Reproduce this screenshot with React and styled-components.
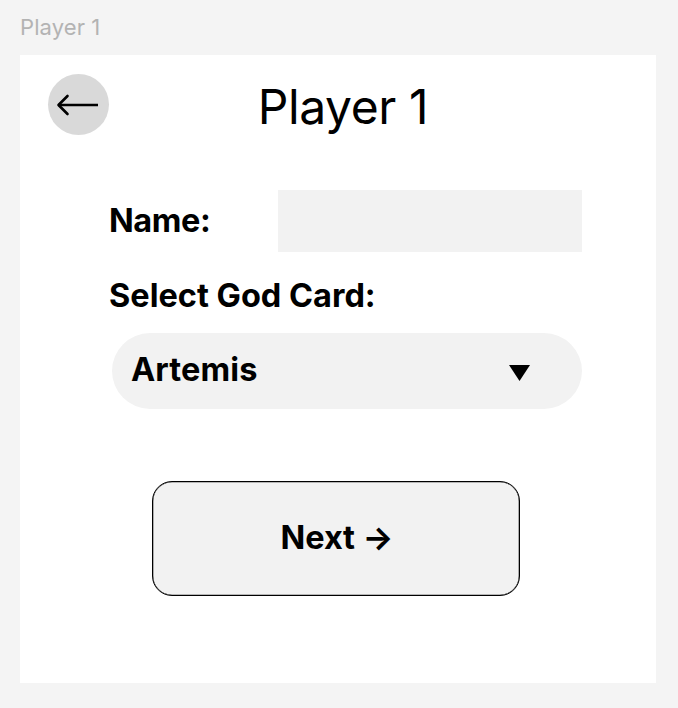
import React from 'react';
import styled, { createGlobalStyle } from 'styled-components';

const GlobalStyle = createGlobalStyle`
  * { box-sizing: border-box; }
  body { margin: 0; background: #f4f4f4; font-family: Inter, sans-serif; color: #000; }
`;

const Canvas = styled.main`
  width: 678px;
  height: 708px;
  padding: 0 22px 25px 20px;
  display: flex;
  flex-direction: column;
  background: #f4f4f4;
  overflow: hidden;
`;

const FrameLabel = styled.div`
  height: 55px;
  line-height: 55px;
  font-size: 22px;
  letter-spacing: 0.1px;
  color: #b3b3b3;
`;

const Frame = styled.section`
  height: 628.6px;
  background: #fff;
  display: flex;
  flex-direction: column;
`;

const Header = styled.header`
  display: grid;
  grid-template-columns: 61px 1fr 61px;
  padding: 19px 28px 0;
  height: 135px;
`;

const BackButton = styled.button`
  width: 61px;
  height: 61px;
  padding: 0;
  border: 0;
  border-radius: 50%;
  background: #d9d9d9;
  svg { display: block; }
`;

const Title = styled.h1`
  margin: 0;
  padding: 4px 0 0 10px;
  font-size: 48px;
  line-height: 58px;
  font-weight: 400;
  letter-spacing: -0.4px;
  text-align: center;
  white-space: nowrap;
`;

const NameRow = styled.label`
  display: flex;
  align-items: center;
  justify-content: space-between;
  padding: 0 74px 0 89px;
  height: 62px;
`;

const Label = styled.span`
  font-size: 32.5px;
  line-height: 40px;
  font-weight: 700;
  letter-spacing: ${({ $tracking = 0 }) => $tracking}px;
  white-space: nowrap;
`;

const NameInput = styled.input`
  width: 304px;
  height: 62px;
  border: 0;
  padding: 0 16px;
  background: #f2f2f2;
  font: inherit;
`;

const CardField = styled.div`
  padding: 24px 74px 0 89px;
  display: flex;
  flex-direction: column;
`;

const Select = styled.button`
  margin: 17px 0 0 2.5px;
  height: 76px;
  border: 0;
  border-radius: 38px;
  background: #f2f2f2;
  padding: 0 52px 2px 19.5px;
  display: flex;
  align-items: center;
  justify-content: space-between;
  font-family: inherit;
  color: inherit;
`;

const Caret = styled.svg`
  display: block;
  margin-top: 6px;
`;

const NextButton = styled.button`
  margin: 72px 0 0 132px;
  padding: 0 0 2px 2px;
  width: 368px;
  height: 115px;
  border: 1px solid #000;
  border-radius: 20px;
  box-shadow: inset 0 0 0 0.3px #000;
  background: #f2f2f2;
  font-family: inherit;
  color: inherit;
`;

export default function App() {
  return (
    <Canvas>
      <GlobalStyle />
      <FrameLabel>Player 1</FrameLabel>
      <Frame>
        <Header>
          <BackButton aria-label="Back">
            <svg width="61" height="61" fill="none" stroke="#000" strokeWidth="2.6" strokeLinejoin="round">
              <path d="M50 31H10.5" />
              <path d="M19.5 22L10.5 31L19.5 40" strokeLinecap="round" />
            </svg>
          </BackButton>
          <Title>Player 1</Title>
        </Header>
        <NameRow>
          <Label $tracking={-0.4}>Name:</Label>
          <NameInput />
        </NameRow>
        <CardField>
          <Label>Select God Card:</Label>
          <Select>
            <Label $tracking={0.1}>Artemis</Label>
            <Caret width="21" height="16"><path d="M0 0H21L10.5 16Z" /></Caret>
          </Select>
        </CardField>
        <NextButton><Label $tracking={-0.1}>Next →</Label></NextButton>
      </Frame>
    </Canvas>
  );
}
